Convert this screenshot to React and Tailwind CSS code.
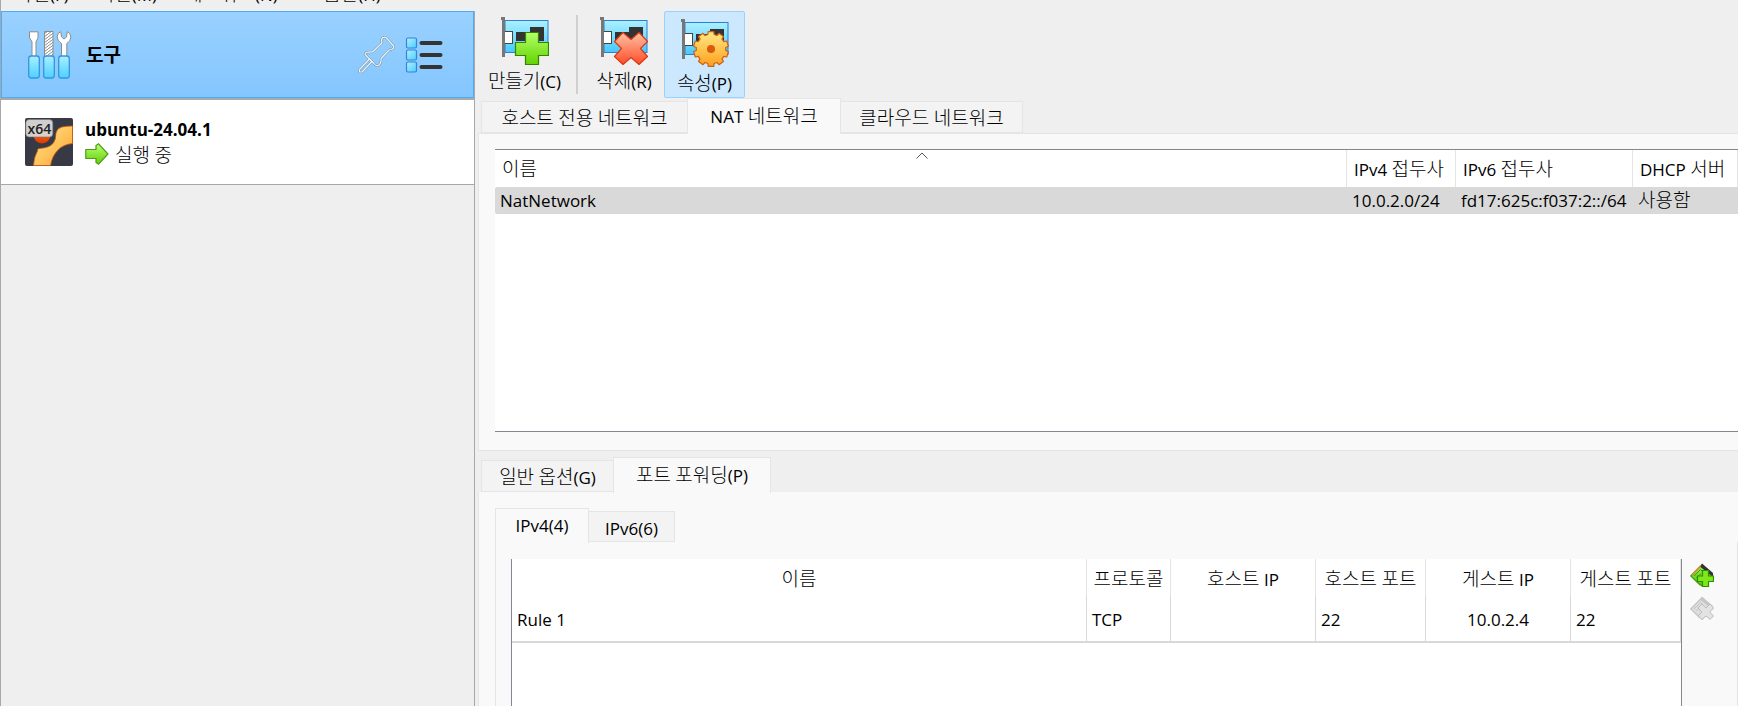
import React from "react";

const HANGUL = /([\uac00-\ud7a3]+)/;

/* Korean syllables are set slightly larger than the Latin text around them. */
function Label({ bold, children }) {
  return (
    <span className="whitespace-nowrap">
      {children.split(HANGUL).map((part, i) =>
        HANGUL.test(part) ? (
          <span key={i} className={"text-[19px] leading-none " + (bold ? "font-bold" : "font-light")}>{part}</span>
        ) : (
          part
        )
      )}
    </span>
  );
}

function ToolsIcon() {
  return (
    <svg width="44" height="48" viewBox="0 0 44 48" aria-hidden="true">
      <defs>
        <linearGradient id="handle" x1="0" y1="0" x2="0" y2="1">
          <stop offset="0" stopColor="#a9efff" />
          <stop offset="1" stopColor="#4fd0ff" />
        </linearGradient>
        <pattern id="file" width="4" height="3" patternUnits="userSpaceOnUse">
          <rect width="4" height="3" fill="#fff" />
          <path d="M0 3L4 0" stroke="#888" strokeWidth="1" />
        </pattern>
      </defs>
      <path d="M1.5.8h8.5v6l-2 4v15H4v-15l-2.5-4z" fill="#fff" stroke="#8b8b8b" />
      <path d="M16.5.5h8.5v26h-8.5z" fill="url(#file)" stroke="#8b8b8b" />
      <path d="M33.500 26V12.500Q29 10 29.200 5.500Q29.600 1.700 32.700.6L33.600 6L36 8L38.500 6L39.300.6Q42.600 2 42.900 6Q43 10 38.800 12.500V26z" fill="#fff" stroke="#8b8b8b" />
      <g fill="url(#handle)" stroke="#3296e0" strokeWidth="1.300">
        <rect x=".7" y="25" width="10.600" height="22" rx="2.500" />
        <rect x="15.700" y="25" width="10.600" height="22" rx="2.500" />
        <rect x="30.700" y="25" width="10.600" height="22" rx="2.500" />
      </g>
    </svg>
  );
}

function PinIcon() {
  return (
    <svg width="37" height="37" viewBox="0 0 37 37" aria-hidden="true" fill="none" strokeLinejoin="round">
      <g stroke="#7f95a8" strokeWidth="2.400">
        <path d="M25 1.500Q27 .5 28.500 2L35.500 10Q36.500 12.500 33 13.500L31 14L23 22.500Q23.500 28 20 29.500Q18 30 16 27.500L8 19.500Q6 17 8.500 16.500Q12 15.500 14.500 16L24 7Q22.500 3.500 25 1.500z" />
        <path d="M11.500 23L1.500 33.500V36H4L14 25.500z" />
      </g>
      <g stroke="#e9f4fd" strokeWidth="1.200">
        <path d="M25 1.500Q27 .5 28.500 2L35.500 10Q36.500 12.500 33 13.500L31 14L23 22.500Q23.500 28 20 29.500Q18 30 16 27.500L8 19.500Q6 17 8.500 16.500Q12 15.500 14.500 16L24 7Q22.500 3.500 25 1.500z" />
        <path d="M11.500 23L1.500 33.500V36H4L14 25.500z" />
      </g>
    </svg>
  );
}

function ListIcon() {
  return (
    <svg width="38" height="36" viewBox="0 0 38 36" aria-hidden="true">
      <defs>
        <linearGradient id="tile" x1="0" y1="0" x2="1" y2="1">
          <stop offset="0" stopColor="#b5f0ff" />
          <stop offset="1" stopColor="#4ccbff" />
        </linearGradient>
      </defs>
      {[1, 13, 25].map((y) => (
        <g key={y}>
          <rect x="1.500" y={y} width="10" height="10" rx="1.500" fill="url(#tile)" stroke="#2e86d8" strokeWidth="1.200" />
          <rect x="14.500" y={y + 3} width="23" height="4" rx="2" fill="#333" />
        </g>
      ))}
    </svg>
  );
}

function MachineIcon() {
  return (
    <svg className="shrink-0" width="48" height="48" viewBox="0 0 48 48" role="img" aria-label="x64">
      <defs>
        <linearGradient id="ring" x1="0" y1="0" x2="1" y2="1">
          <stop offset="0" stopColor="#ffb23c" />
          <stop offset=".4" stopColor="#ffce68" />
          <stop offset="1" stopColor="#ff9d2e" />
        </linearGradient>
        <linearGradient id="ball" x1="0" y1="0" x2="0" y2="1">
          <stop offset="0" stopColor="#ff7a1a" />
          <stop offset="1" stopColor="#e03a00" />
        </linearGradient>
      </defs>
      <rect width="48" height="48" rx="2" fill="#373a45" />
      <circle cx="17" cy="17" r="8.500" fill="url(#ball)" />
      <path d="M8.500 47.500Q9 39 12.500 33Q12 31 14 30.500Q24 30 28 25.500Q31 22 31 15Q32 10 37 9Q42 8 47.500 8V25.500Q38 26.500 33 32Q27 38 25.500 47.500z" fill="url(#ring)" stroke="#c85a14" strokeWidth=".8" />
      <rect x=".8" y="1.500" width="27" height="17.500" rx="3.500" fill="#d7d7d7" fillOpacity=".95" stroke="#777" strokeWidth=".6" />
      <text x="14.300" y="15.500" textAnchor="middle" fontFamily="Open Sans, sans-serif" fontWeight="600" fontSize="14" fill="#222">x64</text>
    </svg>
  );
}

function RunningIcon() {
  return (
    <svg width="24" height="22" viewBox="0 0 24 22" aria-hidden="true">
      <defs>
        <linearGradient id="go" x1="0" y1="0" x2="0" y2="1">
          <stop offset="0" stopColor="#b9ff77" />
          <stop offset="1" stopColor="#63cf00" />
        </linearGradient>
      </defs>
      <path d="M.8 6.500H11V2.500L13.500.8L23 11L13.500 21.200L11 19.500V15.500H.8z" fill="url(#go)" stroke="#4f9a1a" strokeWidth="1.200" />
    </svg>
  );
}

/* Ten flat teeth around a disc centred at (30, 30). */
const GEAR = Array.from({ length: 10 }, (_, i) => {
  const point = (r, deg) => {
    const a = ((i * 36 + deg - 90) * Math.PI) / 180;
    return (30 + r * Math.cos(a)).toFixed(1) + " " + (30 + r * Math.sin(a)).toFixed(1);
  };
  return [point(14.8, -12), point(17.6, -9), point(17.6, 9), point(14.8, 12)].join("L");
}).join("L");

function CardIcon({ kind }) {
  return (
    <svg width="48" height="48" viewBox="0 0 48 48" aria-hidden="true">
      <defs>
        <linearGradient id="card" x1="0" y1="0" x2="0" y2="1">
          <stop offset="0" stopColor="#adf0ff" />
          <stop offset="1" stopColor="#46c9ff" />
        </linearGradient>
        <linearGradient id="green" x1="0" y1="0" x2="0" y2="1">
          <stop offset="0" stopColor="#b4ff68" />
          <stop offset="1" stopColor="#62d400" />
        </linearGradient>
        <linearGradient id="red" x1="0" y1="0" x2="0" y2="1">
          <stop offset="0" stopColor="#ffc3a5" />
          <stop offset="1" stopColor="#ff4b28" />
        </linearGradient>
        <linearGradient id="gold" x1="0" y1="0" x2="0" y2="1">
          <stop offset="0" stopColor="#ffe986" />
          <stop offset="1" stopColor="#ff9f1c" />
        </linearGradient>
      </defs>
      <rect x="4" y="3.500" width="43" height="32" fill="url(#card)" stroke="#2b7fd6" />
      <path d="M15 15h14v-5h14v14H15z" fill="#333" />
      <rect x="3.500" y="14.500" width="8" height="12" fill="#fff" stroke="#444" />
      <path d="M0 1.500H2.500V40" fill="none" stroke="#777" strokeWidth="3" />
      {kind === "add" && (
        <path d="M24.500 15.500h13v10h10v13h-10v9h-13v-9h-10v-13h10z" fill="url(#green)" stroke="#338500" strokeWidth="1.200" />
      )}
      {kind === "remove" && (
        <path d="M14.500 24.500L23 15.500L31 22.500L39 15.500L47.500 24.500L40.500 31.500L47.500 39.500L39 47.500L31 40.500L23 47.500L14.500 39.500L21.500 31.500z" fill="url(#red)" stroke="#d83a14" strokeWidth="1.200" strokeLinejoin="round" />
      )}
      {kind === "edit" && (
        <g>
          <path d={"M" + GEAR + "z"} fill="url(#gold)" stroke="#d06010" strokeWidth="1.200" strokeLinejoin="round" />
          <circle cx="30" cy="30" r="4" fill="#db5a0c" />
        </g>
      )}
    </svg>
  );
}

function RuleIcon({ remove }) {
  return (
    <svg width="24" height="24" viewBox="0 0 24 24" aria-hidden="true">
      <defs>
        <linearGradient id="rule" x1="0" y1="0" x2="0" y2="1">
          <stop offset="0" stopColor="#9af05a" />
          <stop offset="1" stopColor="#55c400" />
        </linearGradient>
      </defs>
      <path d="M.8 13L12 1.500L22.500 11.500L12.500 23L9.500 21.500z" fill={remove ? "#dedede" : "url(#rule)"} stroke={remove ? "#c2c2c2" : "#3d9a14"} strokeWidth="1.200" />
      {!remove && <path d="M1.500 12L11 2.500" stroke="#f08040" strokeWidth="1.300" />}
      <path d="M12 0.500L23 10V14L10.500 4z" fill={remove ? "#c6c6c6" : "#333"} />
      <path d="M4 13L10.500 6.500L13 9M6.500 15L11 10.500" fill="none" stroke={remove ? "#c4c4c4" : "#3d9a14"} />
      {remove ? (
        <path d="M8 12L12 8L16 12L20 8L23.500 12L19.800 16L23.500 20L20 23.500L16 20L12 23.500L8 20L12 16z" fill="#e3e3e3" stroke="#bdbdbd" />
      ) : (
        <path d="M12.500 7.500h6v5.500h5v5.500h-5v5h-6v-5h-5v-5.500h5z" fill="#7fe81c" stroke="#2f8f00" strokeWidth="1.200" />
      )}
    </svg>
  );
}

function Tab({ active, first, inner, width, children }) {
  const base = "flex items-center justify-center border border-[#e5e5e5] ";
  const height = inner ? (active ? "h-[35px] " : "h-[31px] ") : active ? "h-9 " : "h-8 ";
  const tone = active
    ? "relative z-10 -mb-px border-b-0 bg-[#f9f9f9] "
    : "bg-[#f3f3f3] pt-1 " + (first ? "border-r-0 " : "border-l-0 ");
  return (
    <button type="button" role="tab" aria-selected={!!active} className={base + height + tone + width}>
      <Label>{children}</Label>
    </button>
  );
}

function Sidebar() {
  return (
    <aside className="flex w-[475px] shrink-0 flex-col border-x border-[#a8a8a8] bg-[#efefef]">
      <div className="flex h-[87px] items-center border border-[#4dabf7] bg-linear-to-b from-[#99d1ff] to-[#84c6ff] pl-[26px] pr-[30px]">
        <ToolsIcon />
        <strong className="ml-[14px] flex-1 pt-[2px] font-bold"><Label bold>도구</Label></strong>
        <button type="button" aria-label="고정" className="mr-[10px]"><PinIcon /></button>
        <button type="button" aria-label="목록"><ListIcon /></button>
      </div>
      <div className="h-[2px] bg-[#aaa]" />
      <div className="flex h-[85px] items-center gap-3 border-b border-[#a8a8a8] bg-white pl-6">
        <MachineIcon />
        <div className="flex flex-col">
          <strong className="leading-[24px] font-bold">ubuntu-24.04.1</strong>
          <span className="flex h-6 items-center gap-[6px]">
            <RunningIcon />
            <span className="pt-1"><Label>실행 중</Label></span>
          </span>
        </div>
      </div>
    </aside>
  );
}

function Toolbar() {
  return (
    <div className="flex h-[87px] shrink-0 items-stretch pl-1">
      <button type="button" className="flex w-[91px] flex-col items-center gap-[5px] pt-[6px]">
        <CardIcon kind="add" />
        <Label>만들기(C)</Label>
      </button>
      <div className="my-1 ml-[6px] w-[2px] bg-[#d0d0d0]" />
      <button type="button" className="ml-[6px] flex w-20 flex-col items-center gap-[5px] pt-[6px]">
        <CardIcon kind="remove" />
        <Label>삭제(R)</Label>
      </button>
      <button type="button" aria-pressed="true" className="flex w-[81px] flex-col items-center gap-[5px] rounded-[2px] border border-[#99d1ff] bg-[#cce8ff] pt-[7px]">
        <CardIcon kind="edit" />
        <Label>속성(P)</Label>
      </button>
    </div>
  );
}

function NetworkTable() {
  const head = "h-[37px] border-r border-[#e5e5e5] pt-[3px] pl-[7px] text-left font-normal";
  return (
    <div className="relative ml-4 h-[283px] border-y border-[#828790] bg-white">
      <svg className="absolute top-[2px] left-[421px]" width="12" height="7" viewBox="0 0 12 7" aria-hidden="true">
        <path d="M.5 6.500L6 1L11.500 6.500" fill="none" stroke="#555" />
      </svg>
      <table className="w-full table-fixed border-separate border-spacing-0">
        <colgroup>
          <col />
          <col className="w-[109px]" />
          <col className="w-[177px]" />
          <col className="w-[105px]" />
        </colgroup>
        <thead>
          <tr>
            {["이름", "IPv4 접두사", "IPv6 접두사", "DHCP 서버"].map((t) => (
              <th key={t} className={head}><Label>{t}</Label></th>
            ))}
          </tr>
        </thead>
        <tbody>
          <tr className="bg-[#d9d9d9]">
            <td className="h-[27px] rounded-l-[2px] pl-[5px]">NatNetwork</td>
            <td className="pl-[5px]">10.0.2.0/24</td>
            <td className="pl-[5px]">fd17:625c:f037:2::/64</td>
            <td className="pl-[5px]"><Label>사용함</Label></td>
          </tr>
        </tbody>
      </table>
    </div>
  );
}

function RuleTable() {
  const head = "h-[37px] border-r border-[#e5e5e5] pt-1 font-normal";
  const cell = "h-[47px] border-r border-b-2 border-[#d8d8d8] pt-[2px] pl-[5px]";
  return (
    <div className="min-w-0 flex-1 border-x border-[#828790] bg-white">
      <table className="w-full table-fixed border-separate border-spacing-0">
        <colgroup>
          <col />
          <col className="w-[84px]" />
          <col className="w-[145px]" />
          <col className="w-[110px]" />
          <col className="w-[145px]" />
          <col className="w-[110px]" />
        </colgroup>
        <thead>
          <tr>
            {["이름", "프로토콜", "호스트 IP", "호스트 포트", "게스트 IP", "게스트 포트"].map((t) => (
              <th key={t} className={head}><Label>{t}</Label></th>
            ))}
          </tr>
        </thead>
        <tbody>
          <tr>
            <td className={cell}>Rule 1</td>
            <td className={cell}>TCP</td>
            <td className={cell}></td>
            <td className={cell}>22</td>
            <td className={cell + " pr-[5px] text-center"}>10.0.2.4</td>
            <td className={cell}>22</td>
          </tr>
        </tbody>
      </table>
    </div>
  );
}

export default function App() {
  return (
    <div className="flex h-screen flex-col overflow-hidden bg-[#efefef] font-['Open_Sans','Noto_Sans_CJK_KR',sans-serif] text-[17px] leading-[24px] text-black">
      <nav className="flex h-[11px] shrink-0 items-end gap-7 overflow-hidden border-l border-[#a8a8a8] pb-1 pl-[14px]">
        {["파일(F)", "머신(M)", "네트워크(N)", "도움말(H)"].map((t) => (
          <a key={t} href="#"><Label>{t}</Label></a>
        ))}
      </nav>
      <div className="flex min-h-0 flex-1">
        <Sidebar />
        <main className="flex min-w-0 flex-1 flex-col">
          <Toolbar />
          <div role="tablist" className="flex h-[35px] shrink-0 items-end pl-[6px]">
            <Tab first width="w-[206px]">호스트 전용 네트워크</Tab>
            <Tab active width="w-[154px]">NAT 네트워크</Tab>
            <Tab width="w-[182px]">클라우드 네트워크</Tab>
          </div>
          <section className="ml-[3px] border-y border-l border-[#e5e5e5] bg-[#f9f9f9] pt-[15px] pb-[18px]">
            <NetworkTable />
          </section>
          <div role="tablist" className="flex h-[41px] shrink-0 items-end pl-[6px]">
            <Tab first width="w-[132px]">일반 옵션(G)</Tab>
            <Tab active width="w-[158px]">포트 포워딩(P)</Tab>
          </div>
          <section className="ml-[3px] flex min-h-0 flex-1 flex-col border-l border-[#e5e5e5] bg-[#f9f9f9] pt-4 pl-4">
            <div role="tablist" className="flex h-[34px] shrink-0 items-end">
              <Tab active inner width="w-[94px]">IPv4(4)</Tab>
              <Tab inner width="w-[86px]">IPv6(6)</Tab>
            </div>
            <div className="flex min-h-0 flex-1 border-x border-[#e5e5e5] pt-[17px] pl-[15px]">
              <RuleTable />
              <div className="flex w-[55px] flex-col gap-[9px] pt-1 pl-2">
                <button type="button" aria-label="규칙 추가" className="w-6"><RuleIcon /></button>
                <button type="button" aria-label="규칙 삭제" disabled className="w-6"><RuleIcon remove /></button>
              </div>
            </div>
          </section>
        </main>
      </div>
    </div>
  );
}
